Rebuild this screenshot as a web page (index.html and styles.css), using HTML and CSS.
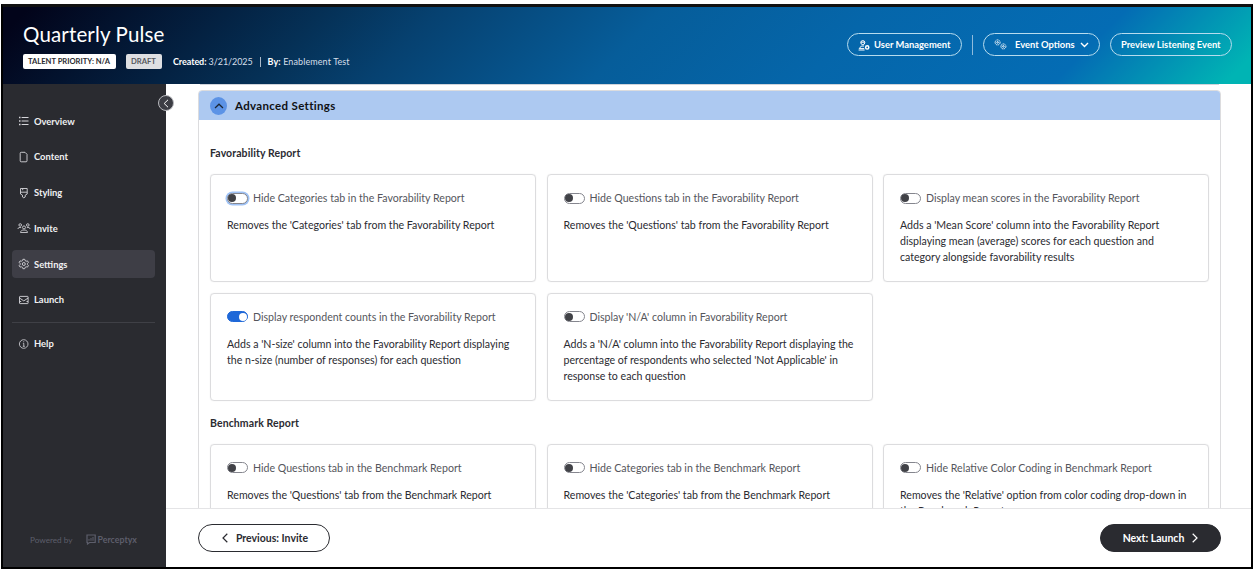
FILE: index.html
```html
<!DOCTYPE html>
<html lang="en">
<head>
  <meta charset="UTF-8">
  <title>Quarterly Pulse</title>
  <link rel="stylesheet" href="styles.css">
</head>
<body>
  <div class="app">
    <header class="header">
      <div class="header-info">
        <h1>Quarterly Pulse</h1>
        <div class="meta">
          <span class="tag tag-white">TALENT PRIORITY: N/A</span>
          <span class="tag tag-grey">DRAFT</span>
          <span class="created"><b>Created:</b> 3/21/2025</span>
          <span class="meta-line"></span>
          <span class="by"><b>By:</b> Enablement Test</span>
        </div>
      </div>
      <div class="header-actions">
        <button class="pill pill-user">
          <svg width="12" height="12" viewBox="0 0 12 12" fill="none" stroke="currentColor">
            <circle cx="4.8" cy="3.6" r="2"/>
            <path d="M2.8 3.2h4M6 7H3.4L1.2 9.6h5M.6 11h6"/>
            <circle cx="9.2" cy="8.4" r="1.6" stroke-width="1.5"/>
          </svg>
          <span>User Management</span>
        </button>
        <span class="actions-line"></span>
        <button class="pill pill-options">
          <svg width="13" height="11" viewBox="0 0 13 11" fill="none" stroke="currentColor" stroke-width=".9">
            <circle cx="3.6" cy="3.4" r="2.5" stroke-dasharray="1.6 .5"/>
            <circle cx="3.6" cy="3.4" r=".8"/>
            <circle cx="9.4" cy="7.4" r="2.5" stroke-dasharray="1.6 .5"/>
            <circle cx="9.4" cy="7.4" r=".8"/>
          </svg>
          <span>Event Options</span>
          <svg class="caret" width="9" height="6" viewBox="0 0 9 6" fill="none" stroke="currentColor" stroke-width="1.4"><path d="M1 1l3.5 3.5L8 1"/></svg>
        </button>
        <button class="pill pill-preview"><span>Preview Listening Event</span></button>
      </div>
    </header>

    <div class="body">
      <aside class="sidebar">
        <button class="collapse">
          <svg width="6" height="9" viewBox="0 0 6 9" fill="none" stroke="currentColor"><path d="M5 .8L1.2 4.5 5 8.2"/></svg>
        </button>
        <nav class="nav">
          <a class="nav-item">
            <svg width="12" height="12" viewBox="0 0 12 12" fill="none" stroke="currentColor"><path d="M3.6 2.5H10.5M3.6 6H10.5M3.6 9.5H10.5"/><path d="M1 2.5h1.5M1 6h1.5M1 9.5h1.5" stroke-width="1.7"/></svg>
            <span>Overview</span>
          </a>
          <a class="nav-item">
            <svg width="12" height="12" viewBox="0 0 12 12" fill="none" stroke="currentColor" stroke-width=".9"><path d="M3.2 1.3H7l2 2V9.800a1 1 0 0 1-1 1H3.200a1 1 0 0 1-1-1V2.300a1 1 0 0 1 1-1z"/></svg>
            <span>Content</span>
          </a>
          <a class="nav-item">
            <svg width="12" height="12" viewBox="0 0 12 12" fill="none" stroke="currentColor" stroke-width=".9"><path d="M2.500 1.500H9.200V7L7.200 8.200V10L5.800 10.800 4.500 10V8.200L2.500 7zM2.500 5.200H9.200M4.700 1.500V3.200"/></svg>
            <span>Styling</span>
          </a>
          <a class="nav-item">
            <svg width="12" height="12" viewBox="0 0 12 12" fill="none" stroke="currentColor" stroke-width=".85" overflow="visible"><circle cx="2.200" cy="3" r="1.300"/><circle cx="9.800" cy="3" r="1.300"/><circle cx="6" cy="5.400" r="1.500"/><path d="M-.2 7C.2 5.600 1.500 5.100 3.200 5.700M12.200 7C11.800 5.600 10.500 5.100 8.800 5.700M2.500 10.500C2.800 8.600 4 8 6 8S9.200 8.600 9.500 10.500z"/></svg>
            <span>Invite</span>
          </a>
          <a class="nav-item active">
            <svg width="12" height="12" viewBox="0 0 12 12" fill="none" stroke="currentColor" stroke-width=".9"><path d="M4.900 1.300H6.700L7.100 2.600 8.200 3.200 9.500 2.900 10.400 4.400 9.500 5.400V6.600L10.400 7.600 9.500 9.100 8.200 8.800 7.100 9.400 6.700 10.700H4.900L4.500 9.400 3.400 8.800 2.100 9.100 1.200 7.600 2.100 6.600V5.400L1.200 4.400 2.100 2.900 3.400 3.200 4.500 2.600z"/><circle cx="5.800" cy="6" r="1.500"/></svg>
            <span>Settings</span>
          </a>
          <a class="nav-item">
            <svg width="12" height="12" viewBox="0 0 12 12" fill="none" stroke="currentColor" stroke-width=".9"><rect x="1.500" y="2.400" width="8.600" height="7.200" rx=".6"/><path d="M1.500 4L5.800 6.900 10.100 4M1.500 7.500H3.200M8.500 7.500H10"/></svg>
            <span>Launch</span>
          </a>
        </nav>
        <nav class="nav nav-help">
          <a class="nav-item">
            <svg width="12" height="12" viewBox="0 0 12 12" fill="none" stroke="currentColor" stroke-width=".8"><circle cx="5.700" cy="6" r="4.300"/><path d="M4.900 5.300H5.800V8.300M4.800 8.300H6.800M5.700 3.300V4.200"/></svg>
            <span>Help</span>
          </a>
        </nav>
        <div class="powered">
          <span class="powered-by">Powered by</span>
          <svg width="10" height="11" viewBox="0 0 10 11" fill="none" stroke="currentColor" stroke-width="1.200"><path d="M1 1H9.200V8.500H3.500L1.500 10V8.500H1z"/><path d="M3 6.800V5M5 6.800V4M7 6.800V3" stroke-width="1"/></svg>
          <span class="brand">Perceptyx</span>
        </div>
      </aside>

      <main class="main">
        <div class="content">
          <div class="previous-panel"></div>
          <section class="panel">
            <div class="panel-head">
              <span class="panel-toggle">
                <svg width="10" height="6" viewBox="0 0 10 6" fill="none" stroke="currentColor" stroke-width="1.200"><path d="M1 5L5 1.200 9 5"/></svg>
              </span>
              <h2>Advanced Settings</h2>
            </div>
            <div class="panel-body">
              <h3>Favorability Report</h3>
              <div class="cards">
                <div class="card">
                  <div class="option"><span class="switch focus"></span><span class="label">Hide Categories tab in the Favorability Report</span></div>
                  <p>Removes the 'Categories' tab from the Favorability Report</p>
                </div>
                <div class="card">
                  <div class="option"><span class="switch"></span><span class="label">Hide Questions tab in the Favorability Report</span></div>
                  <p>Removes the 'Questions' tab from the Favorability Report</p>
                </div>
                <div class="card">
                  <div class="option"><span class="switch"></span><span class="label">Display mean scores in the Favorability Report</span></div>
                  <p>Adds a 'Mean Score' column into the Favorability Report<br>displaying mean (average) scores for each question and<br>category alongside favorability results</p>
                </div>
                <div class="card">
                  <div class="option"><span class="switch on"></span><span class="label">Display respondent counts in the Favorability Report</span></div>
                  <p>Adds a 'N-size' column into the Favorability Report displaying<br>the n-size (number of responses) for each question</p>
                </div>
                <div class="card">
                  <div class="option"><span class="switch"></span><span class="label">Display 'N/A' column in Favorability Report</span></div>
                  <p>Adds a 'N/A' column into the Favorability Report displaying the<br>percentage of respondents who selected 'Not Applicable' in<br>response to each question</p>
                </div>
              </div>
              <h3>Benchmark Report</h3>
              <div class="cards">
                <div class="card">
                  <div class="option"><span class="switch"></span><span class="label">Hide Questions tab in the Benchmark Report</span></div>
                  <p>Removes the 'Questions' tab from the Benchmark Report</p>
                </div>
                <div class="card">
                  <div class="option"><span class="switch"></span><span class="label">Hide Categories tab in the Benchmark Report</span></div>
                  <p>Removes the 'Categories' tab from the Benchmark Report</p>
                </div>
                <div class="card">
                  <div class="option"><span class="switch"></span><span class="label">Hide Relative Color Coding in Benchmark Report</span></div>
                  <p>Removes the 'Relative' option from color coding drop-down in<br>the Benchmark Report</p>
                </div>
              </div>
            </div>
          </section>
        </div>
        <footer class="footer">
          <button class="btn btn-prev">
            <svg width="6" height="10" viewBox="0 0 6 10" fill="none" stroke="currentColor" stroke-width="1.200"><path d="M5.300 .8L1 5 5.300 9.200"/></svg>
            <span>Previous: Invite</span>
          </button>
          <button class="btn btn-next">
            <span>Next: Launch</span>
            <svg width="6" height="10" viewBox="0 0 6 10" fill="none" stroke="currentColor" stroke-width="1.200"><path d="M.7 .8L5 5 .7 9.200"/></svg>
          </button>
        </footer>
      </main>
    </div>
  </div>
</body>
</html>
```
FILE: styles.css
```css
* {
  box-sizing: border-box;
}

body {
  margin: 0;
  padding: 4px 0 0 1px;
  background: #fff;
  color: #2b2b31;
  font-family: Lato, "Liberation Sans", sans-serif;
  font-size: 10.6px;
  overflow: hidden;
}

h1, h2, h3, p {
  margin: 0;
}

button {
  font-family: inherit;
  cursor: pointer;
}

svg {
  flex: none;
}

span {
  white-space: nowrap;
}

.app {
  display: flex;
  flex-direction: column;
  width: 1252px;
  height: 565px;
  border: 2px solid #000;
  border-top-width: 3px;
  border-top-color: #111;
}

/* Header */
.header {
  display: flex;
  justify-content: space-between;
  flex: none;
  height: 77px;
  padding: 0 19px 0 20px;
  color: #fff;
  background: linear-gradient(135deg, #02041a 2%, #053157 25%, #064170 33%, #065d9a 50%, #0566aa 66%, #046cb4 85%, #00b4b4 98%);
}

.header h1 {
  margin-top: 15px;
  font-size: 20.5px;
  line-height: 24px;
  font-weight: 400;
  letter-spacing: 0.15px;
}

.meta {
  display: flex;
  align-items: center;
  height: 15px;
  margin-top: 8px;
  font-size: 9px;
}

.tag {
  height: 15px;
  padding: 0 5px;
  border-radius: 2px;
  font-size: 7.6px;
  line-height: 15px;
  font-weight: 700;
  color: #2b2b31;
}

.tag-white {
  width: 93px;
  background: #fff;
}

.tag-grey {
  width: 36px;
  margin: 0 11px 0 10px;
  background: #dedfe2;
  color: #55565c;
}

.created,
.by {
  color: #d5dfe9;
}

.created {
  letter-spacing: -0.08px;
}

.by {
  letter-spacing: 0.1px;
}

.meta b {
  color: #fff;
}

.meta-line {
  width: 1px;
  height: 10px;
  margin: 0 7px;
  background: #aab9c9;
}

.header-actions {
  display: flex;
  align-items: center;
  height: 23px;
  margin-top: 26px;
}

.pill {
  display: flex;
  align-items: center;
  height: 23px;
  padding: 0 10px;
  border: 1px solid #b7dcee;
  border-radius: 12px;
  background: transparent;
  color: #fff;
  font-size: 9.4px;
  font-weight: 700;
}

.pill-user {
  width: 115px;
  gap: 4px;
}

.actions-line {
  width: 1px;
  height: 20px;
  margin: 0 10px;
  background: #8fbbdc;
}

.pill-options {
  width: 117px;
  margin-right: 10px;
}

.pill-options span {
  margin: 0 5px 0 8px;
}

.pill-preview {
  width: 122px;
}

/* Sidebar */
.body {
  display: flex;
  flex: 1;
  min-height: 0;
}

.sidebar {
  position: relative;
  display: flex;
  flex-direction: column;
  width: 163px;
  padding: 23px 11px 0 9px;
  background: #2a2b30;
  color: #f0f0f2;
}

.collapse {
  position: absolute;
  top: 11px;
  right: -8px;
  display: flex;
  align-items: center;
  justify-content: center;
  width: 16px;
  height: 16px;
  padding: 0 1px 0 0;
  border: 1px solid #b9babe;
  border-radius: 50%;
  background: #3c3d44;
  color: #fff;
}

.nav {
  display: flex;
  flex-direction: column;
  gap: 7.75px;
}

.nav-item {
  display: flex;
  align-items: center;
  gap: 4px;
  height: 28px;
  padding-left: 6px;
  border-radius: 4px;
  font-size: 9.4px;
  font-weight: 700;
}

.nav-item.active {
  background: #3e3e46;
}

.nav-item svg {
  color: #d6d6da;
}

.nav-help {
  margin-top: 8px;
  padding-top: 7px;
  border-top: 1px solid #3f4046;
}

.powered {
  display: flex;
  align-items: center;
  margin: auto 0 22px 18px;
  color: #5d5e6b;
}

.powered-by {
  margin-right: 13px;
  font-size: 8.2px;
}

.brand {
  margin-left: 2px;
  font-size: 8.8px;
  font-weight: 700;
}

/* Settings panel */
.main {
  display: flex;
  flex: 1;
  flex-direction: column;
  min-width: 0;
}

.content {
  flex: 1;
  min-height: 0;
  padding: 0 30px 0 32px;
  overflow: hidden;
}

.previous-panel {
  height: 1px;
  margin: 0 2px 5px;
  background: #cfd3da;
}

.panel {
  border: 1px solid #dcdcde;
  border-radius: 4px 4px 0 0;
}

.panel-head {
  display: flex;
  align-items: center;
  gap: 8px;
  height: 29px;
  padding-left: 11px;
  border-radius: 3px 3px 0 0;
  background: #adc9f1;
}

.panel-toggle {
  display: flex;
  align-items: center;
  justify-content: center;
  width: 17px;
  height: 18px;
  border-radius: 50%;
  background: #5c93e6;
  color: #1c2634;
}

.panel-head h2 {
  font-size: 11.5px;
  letter-spacing: 0.33px;
  color: #101114;
}

.panel-body {
  padding: 25px 11px 0;
}

.panel-body h3 {
  font-size: 10.5px;
  line-height: 16px;
  letter-spacing: 0.1px;
}

.cards {
  display: grid;
  grid-template-columns: repeat(3, 326px);
  grid-auto-rows: 108px;
  gap: 10.5px;
  margin: 13px 0 14px;
}

.card {
  padding: 15px 15px 0 16px;
  border: 1px solid #dcdcde;
  border-radius: 4px;
  box-shadow: 0 0 1px #dcdcde;
}

.option {
  display: flex;
  align-items: center;
  gap: 5px;
  height: 16px;
  color: #55565c;
}

.switch {
  display: flex;
  align-items: center;
  width: 21px;
  height: 11px;
  border: 1px solid #85868e;
  border-radius: 6px;
  background: #fff;
}

.switch::before {
  content: "";
  width: 8px;
  height: 8px;
  border-radius: 50%;
  background: #414247;
}

.switch.focus {
  box-shadow: 0 0 0 1.5px #9fc2f5;
}

.switch.on {
  justify-content: flex-end;
  border-color: #1f68d8;
  background: #1f68d8;
}

.switch.on::before {
  background: #fff;
}

.card p {
  margin-top: 11px;
  line-height: 16px;
  white-space: nowrap;
}

/* Footer */
.footer {
  display: flex;
  align-items: flex-start;
  justify-content: space-between;
  flex: none;
  height: 59px;
  padding: 15px 30px 0 32px;
  border-top: 1px solid #e4e4e6;
  background: #fff;
}

.btn {
  display: flex;
  align-items: center;
  justify-content: center;
  gap: 8px;
  height: 28px;
  padding: 0;
  border: 1px solid #2a2b30;
  border-radius: 14px;
  font-size: 10.5px;
  font-weight: 700;
}

.btn-prev {
  width: 132px;
  padding-left: 2px;
  background: #fff;
  color: #2b2b31;
}

.btn-next {
  width: 121px;
  background: #2a2b30;
  color: #fff;
}
```
